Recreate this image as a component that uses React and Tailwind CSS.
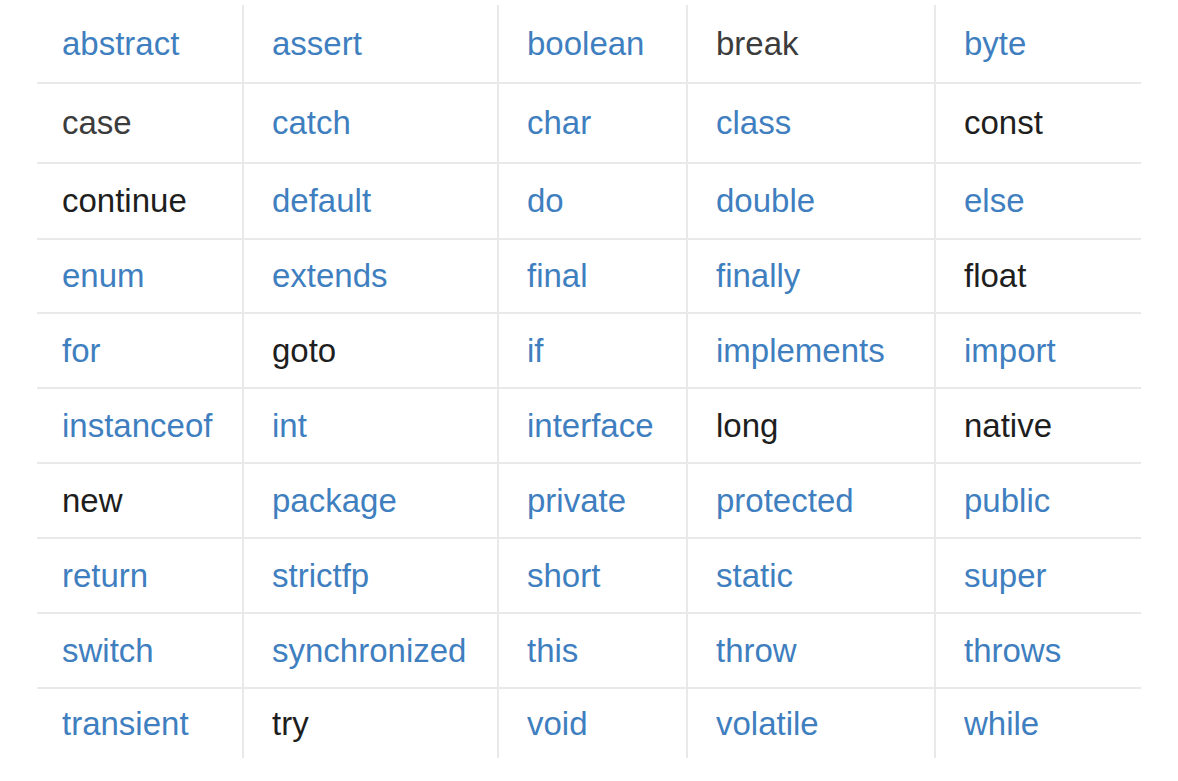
const ROWS = [
  ['abstract', 'assert', 'boolean', 'break', 'byte'],
  ['case', 'catch', 'char', 'class', 'const'],
  ['continue', 'default', 'do', 'double', 'else'],
  ['enum', 'extends', 'final', 'finally', 'float'],
  ['for', 'goto', 'if', 'implements', 'import'],
  ['instanceof', 'int', 'interface', 'long', 'native'],
  ['new', 'package', 'private', 'protected', 'public'],
  ['return', 'strictfp', 'short', 'static', 'super'],
  ['switch', 'synchronized', 'this', 'throw', 'throws'],
  ['transient', 'try', 'void', 'volatile', 'while'],
]

// Mots sans lien dans la page d'origine : texte noir, le reste en bleu.
const GRIS = new Set(['break', 'case'])
const NOIRS = new Set(['const', 'continue', 'float', 'goto', 'long', 'native', 'new', 'try'])

const HAUTEURS = ['h-[79px]', 'h-[80px]', 'h-[76px]', 'h-[74px]', 'h-[75px]', 'h-[75px]', 'h-[75px]', 'h-[75px]', 'h-[75px]', 'h-[69px]']

function couleur(mot) {
  if (GRIS.has(mot)) return 'text-[#3c3c3c]'
  if (NOIRS.has(mot)) return 'text-[#1e1e1e]'
  return 'text-[#3f7fc0]'
}

export default function App() {
  return (
    <div className="min-h-[781px] w-[1178px] bg-white pt-[5px] pl-[37px] font-['Liberation_Sans',Arial,sans-serif]">
      <div className="grid w-[1104px] grid-cols-[205px_255px_189px_248px_207px]">
        {ROWS.map((row, r) =>
          row.map((mot, c) => (
            <div
              key={mot}
              className={[
                'flex items-center text-[33px] leading-normal',
                HAUTEURS[r],
                r < ROWS.length - 1 ? 'border-b-2 border-[#e9e9e9]' : '',
                c > 0 ? 'border-l-2 border-l-[#e9e9e9] pl-[28px]' : 'pl-[25px]',
                couleur(mot),
              ].join(' ')}
            >
              {mot}
            </div>
          )),
        )}
      </div>
    </div>
  )
}
